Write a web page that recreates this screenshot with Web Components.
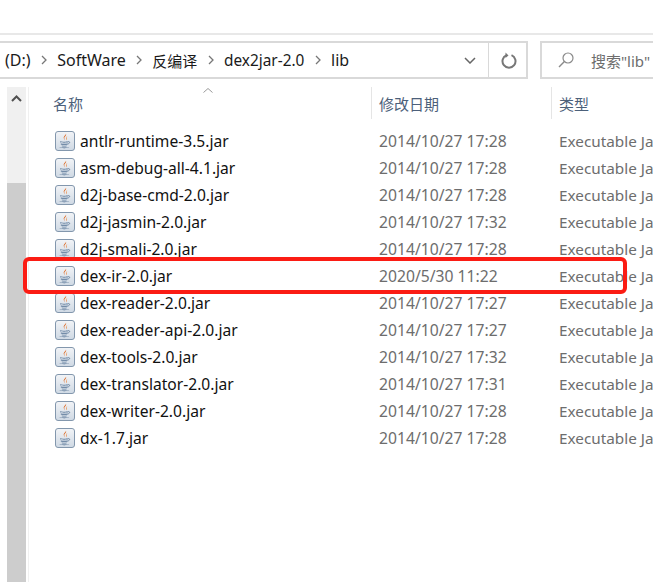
<!DOCTYPE html>
<html>
<head>
<meta charset="utf-8">
<title>lib</title>
<style>
  html, body { margin: 0; padding: 0; background: #fff; }
  body { width: 653px; height: 582px; overflow: hidden; font-family: "Noto Sans", "Noto Sans CJK SC", sans-serif; }
</style>
</head>
<body>
<explorer-window></explorer-window>

<script>
// jar file icon, drawn small like the shell one
class JarIcon extends HTMLElement {
  constructor() {
    super();
    const shadow = this.attachShadow({ mode: 'open' });
    shadow.innerHTML = `
    <style>
      :host { display: block; width: 20px; height: 20px; flex: none; }
      svg { display: block; }
    </style>
    <svg width="20" height="20" viewBox="0 0 20 20">
      <defs>
        <linearGradient id="bg" x1="0" y1="0" x2="0" y2="1">
          <stop offset="0" stop-color="#f2f4f7"/>
          <stop offset="1" stop-color="#cfd9e4"/>
        </linearGradient>
      </defs>
      <rect x="0.5" y="0.5" width="19" height="19" rx="2.5" fill="url(#bg)" stroke="#8397ad"/>
      <path d="M10.800 2c1.200 1.900-3 3.100-1.900 5.500.3.700.8 1.200 1 2-.1-1.400-.9-1.800-.6-2.900.4-1.100 2.700-2 1.500-4.600z" fill="#dd5f14"/>
      <path d="M12.600 5c-1.200.7-2 1.300-1.500 2.500.2.600.4 1 .2 1.800 1-.9.600-1.700.3-2.300-.3-.7.200-1.200 1-2z" fill="#ea8a45"/>
      <path d="M5 10.300c1.700.6 6.500.6 8.200 0v1c-1.700.5-6.500.5-8.200 0z" fill="#64809f"/>
      <path d="M5.800 12.400c1.600.4 5.200.4 6.800 0v1c-1.600.4-5.200.4-6.800 0z" fill="#527093"/>
      <path d="M13.200 10.600c1.900-.4 2.200 1.800-.6 2.500" fill="none" stroke="#64809f" stroke-width=".9"/>
      <path d="M6.800 14.400c1.300.3 3.600.3 4.900 0v.8c-1.300.4-3.600.4-4.900 0z" fill="#64809f"/>
      <path d="M4.300 16c2 .8 7.800.8 10 0-.9 1.500-8.900 1.600-10 0z" fill="#466689"/>
    </svg>`;
  }
}
customElements.define('jar-icon', JarIcon);

class FileRow extends HTMLElement {
  constructor() {
    super();
    const shadow = this.attachShadow({ mode: 'open' });
    shadow.innerHTML = `
    <style>
      :host { display: grid; grid-template-columns: 324px 180px 200px; height: 27px; align-items: center; font-size: 15.6px; white-space: nowrap; }
      .name { display: flex; align-items: center; gap: 5px; color: #111; }
      .date { color: #6d6d6d; font-size: 15.7px; }
      .type { color: #6d6d6d; font-size: 15.3px; }
    </style>
    <div class="name"><jar-icon></jar-icon><span id="n"></span></div>
    <div class="date" id="d"></div>
    <div class="type">Executable Jar File</div>`;
  }
  connectedCallback() {
    this.shadowRoot.getElementById('n').textContent = this.getAttribute('name');
    this.shadowRoot.getElementById('d').textContent = this.getAttribute('date');
  }
}
customElements.define('file-row', FileRow);

class ColumnHeader extends HTMLElement {
  constructor() {
    super();
    const shadow = this.attachShadow({ mode: 'open' });
    shadow.innerHTML = `
    <style>
      :host { display: grid; grid-template-columns: 318px 180px 100px; height: 32px; margin-left: -1px; font: 15px "Noto Sans CJK SC", sans-serif; color: #4c607a; position: relative; }
      div { display: flex; align-items: center; box-sizing: border-box; }
      div + div { border-left: 1px solid #e5e5e5; padding-left: 7px; }
      svg { position: absolute; left: 149px; top: 0; }
    </style>
    <div>名称</div><div>修改日期</div><div>类型</div>
    <svg width="12" height="7" viewBox="0 0 12 7"><path d="M1.500 5.500 6 1.500l4.500 4" fill="none" stroke="#9a9a9a"/></svg>`;
  }
}
customElements.define('column-header', ColumnHeader);

class AddressBar extends HTMLElement {
  constructor() {
    super();
    const shadow = this.attachShadow({ mode: 'open' });
    shadow.innerHTML = `
    <style>
      :host { display: flex; align-items: stretch; width: 528px; height: 38px; box-sizing: border-box; border: 2px solid #d9d9d9; border-left: none; font-size: 16px; color: #1a1a1a; white-space: nowrap; }
      .path { flex: 1; display: flex; align-items: center; padding-left: 5px; }
      .cjk { font-size: 15px; }
      .ver { font-size: 15.4px; }
      .sep { display: block; margin: 0 10.3px; }
      .drop { width: 36px; display: flex; align-items: center; justify-content: center; }
      .refresh { width: 38px; border-left: 1px solid #d9d9d9; display: flex; align-items: center; justify-content: center; padding-left: 3px; box-sizing: border-box; }
    </style>
    <div class="path">
      <span>(D:)</span>
      <svg class="sep" width="6" height="10" viewBox="0 0 6 10"><path d="M1 1l4 4-4 4" fill="none" stroke="#777" stroke-width="1.300"/></svg>
      <span>SoftWare</span>
      <svg class="sep" width="6" height="10" viewBox="0 0 6 10"><path d="M1 1l4 4-4 4" fill="none" stroke="#777" stroke-width="1.300"/></svg>
      <span class="cjk">反编译</span>
      <svg class="sep" width="6" height="10" viewBox="0 0 6 10"><path d="M1 1l4 4-4 4" fill="none" stroke="#777" stroke-width="1.300"/></svg>
      <span class="ver">dex2jar-2.0</span>
      <svg class="sep" width="6" height="10" viewBox="0 0 6 10"><path d="M1 1l4 4-4 4" fill="none" stroke="#777" stroke-width="1.300"/></svg>
      <span>lib</span>
    </div>
    <div class="drop"><svg width="12" height="7" viewBox="0 0 12 7"><path d="M1 1l5 5 5-5" fill="none" stroke="#666" stroke-width="1.500"/></svg></div>
    <div class="refresh"><svg width="16" height="17" viewBox="0 0 16 17"><path d="M5.500 3.200A6.500 6.500 0 1 0 10.500 3.200" fill="none" stroke="#777" stroke-width="2"/><path d="M4.500 0.500l3 3-3 2.500z" fill="#777"/></svg></div>`;
  }
}
customElements.define('address-bar', AddressBar);

class SearchBox extends HTMLElement {
  constructor() {
    super();
    const shadow = this.attachShadow({ mode: 'open' });
    shadow.innerHTML = `
    <style>
      :host { display: flex; align-items: center; flex: 1; height: 38px; box-sizing: border-box; border: 2px solid #d9d9d9; border-right: none; padding-left: 16px; gap: 17px; font: 15px "Noto Sans", "Noto Sans CJK SC", sans-serif; color: #6d6d6d; white-space: nowrap; overflow: hidden; }
      svg { flex: none; }
    </style>
    <svg width="16" height="16" viewBox="0 0 16 16"><circle cx="10" cy="6" r="5" fill="none" stroke="#8a8a8a" stroke-width="1.200"/><path d="M6.400 9.600 1 15" fill="none" stroke="#8a8a8a" stroke-width="1.400"/></svg>
    <span>搜索"lib"</span>`;
  }
}
customElements.define('search-box', SearchBox);

class ScrollBar extends HTMLElement {
  constructor() {
    super();
    const shadow = this.attachShadow({ mode: 'open' });
    shadow.innerHTML = `
    <style>
      :host { display: flex; flex-direction: column; width: 19px; margin-left: 7px; flex: none; background: #f0f0f0; }
      .btn { height: 23px; display: flex; align-items: center; justify-content: center; }
      .track { height: 73px; }
      .thumb { flex: 1; background: #cdcdcd; }
    </style>
    <div class="btn"><svg width="11" height="7" viewBox="0 0 11 7"><path d="M1 6l4.500-4.500L10 6" fill="none" stroke="#505050" stroke-width="2"/></svg></div>
    <div class="track"></div>
    <div class="thumb"></div>`;
  }
}
customElements.define('scroll-bar', ScrollBar);

class ExplorerWindow extends HTMLElement {
  constructor() {
    super();
    const shadow = this.attachShadow({ mode: 'open' });
    const files = [
      ['antlr-runtime-3.5.jar', '2014/10/27 17:28'],
      ['asm-debug-all-4.1.jar', '2014/10/27 17:28'],
      ['d2j-base-cmd-2.0.jar', '2014/10/27 17:28'],
      ['d2j-jasmin-2.0.jar', '2014/10/27 17:32'],
      ['d2j-smali-2.0.jar', '2014/10/27 17:28'],
      ['dex-ir-2.0.jar', '2020/5/30 11:22'],
      ['dex-reader-2.0.jar', '2014/10/27 17:27'],
      ['dex-reader-api-2.0.jar', '2014/10/27 17:27'],
      ['dex-tools-2.0.jar', '2014/10/27 17:32'],
      ['dex-translator-2.0.jar', '2014/10/27 17:31'],
      ['dex-writer-2.0.jar', '2014/10/27 17:28'],
      ['dx-1.7.jar', '2014/10/27 17:28']
    ];
    const rows = files.map(f => `<file-row name="${f[0]}" date="${f[1]}"></file-row>`).join('');
    shadow.innerHTML = `
    <style>
      :host { display: flex; flex-direction: column; width: 653px; height: 582px; position: relative; overflow: hidden; background: #fff; }
      .top { height: 33px; border-bottom: 2px solid #e8e8e8; flex: none; }
      .bar { display: flex; gap: 12px; margin-top: 6px; flex: none; }
      .main { flex: 1; display: flex; margin-top: 8px; min-height: 0; }
      .edge { width: 1px; margin-left: 2px; background: #f0f0f0; flex: none; }
      .list { flex: 1; min-width: 0; padding-left: 25px; overflow: hidden; }
      .rows { margin-top: 8px; margin-left: 1px; }
      .mark { position: absolute; left: 23px; top: 257px; width: 604px; height: 37px; box-sizing: border-box; border: 4px solid #fb1c14; border-radius: 6px; }
    </style>
    <div class="top"></div>
    <div class="bar"><address-bar></address-bar><search-box></search-box></div>
    <div class="main">
      <scroll-bar></scroll-bar>
      <div class="edge"></div>
      <div class="list">
        <column-header></column-header>
        <div class="rows">${rows}</div>
      </div>
    </div>
    <div class="mark"></div>`;
  }
}
customElements.define('explorer-window', ExplorerWindow);
</script>
</body>
</html>
